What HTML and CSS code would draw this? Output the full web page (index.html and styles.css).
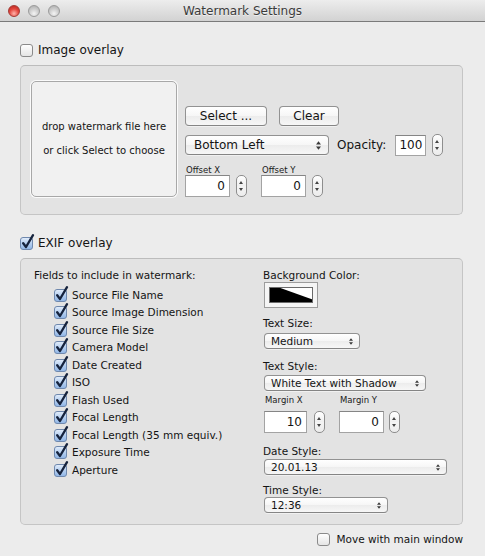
FILE: index.html
```html
<!DOCTYPE html>
<html>
<head>
<meta charset="utf-8">
<title>Watermark Settings</title>
<link rel="stylesheet" href="styles.css">
</head>
<body>
<svg class="defs" width="0" height="0">
  <defs>
    <linearGradient id="cbon" x1="0" y1="0" x2="0" y2="1">
      <stop offset="0" stop-color="#e4eefb"/>
      <stop offset="0.5" stop-color="#b5cff0"/>
      <stop offset="1" stop-color="#8fb5e6"/>
    </linearGradient>
    <linearGradient id="cboff" x1="0" y1="0" x2="0" y2="1">
      <stop offset="0" stop-color="#ffffff"/>
      <stop offset="1" stop-color="#e4e4e4"/>
    </linearGradient>
    <symbol id="chk" viewBox="0 0 15 16">
      <rect x="0.5" y="3.5" width="12" height="12" rx="2.5" fill="url(#cbon)" stroke="#6f88ad"/>
      <path d="M3.2 9.2 L6 13 L13 1.2" fill="none" stroke="#16233d" stroke-width="2.3" stroke-linecap="round" stroke-linejoin="round"/>
    </symbol>
    <symbol id="unchk" viewBox="0 0 15 16">
      <rect x="0.5" y="3.5" width="12" height="12" rx="2.5" fill="url(#cboff)" stroke="#8a8a8a"/>
    </symbol>
  </defs>
</svg>

<div class="titlebar">
  <div class="lights"><span class="light red"></span><span class="light"></span><span class="light"></span></div>
  <div class="title">Watermark Settings</div>
  <div></div>
</div>

<div class="content">
  <div class="heading"><svg class="cb" width="15" height="16"><use href="#unchk"/></svg><span>Image overlay</span></div>

  <div class="group group-image">
    <div class="dropzone"><p>drop watermark file here</p><p>or click Select to choose</p></div>
    <div class="image-controls">
      <div class="row">
        <button class="btn btn-select">Select ...</button>
        <button class="btn btn-clear">Clear</button>
      </div>
      <div class="row row-pos">
        <div class="popup popup-pos"><span>Bottom Left</span><svg class="ud" width="5" height="9" viewBox="0 0 5 9"><path d="M0 3.6L2.5 0.2L5 3.6Z M0 5.4L2.5 8.8L5 5.4Z"/></svg></div>
        <span class="opacity-label">Opacity:</span>
        <div class="field field-opacity">100</div>
        <span class="stepper"></span>
      </div>
      <div class="row row-offsets">
        <div class="num">
          <div class="mini">Offset X</div>
          <div class="num-row"><div class="field field-off">0</div><span class="stepper"></span></div>
        </div>
        <div class="num num-second">
          <div class="mini">Offset Y</div>
          <div class="num-row"><div class="field field-off">0</div><span class="stepper"></span></div>
        </div>
      </div>
    </div>
  </div>

  <div class="heading heading-exif"><svg class="cb" width="15" height="16"><use href="#chk"/></svg><span>EXIF overlay</span></div>

  <div class="group group-exif">
    <div class="fields">
      <div class="fields-title">Fields to include in watermark:</div>
      <div class="items">
        <div class="item"><svg class="cb" width="15" height="16"><use href="#chk"/></svg><span>Source File Name</span></div>
        <div class="item"><svg class="cb" width="15" height="16"><use href="#chk"/></svg><span>Source Image Dimension</span></div>
        <div class="item"><svg class="cb" width="15" height="16"><use href="#chk"/></svg><span>Source File Size</span></div>
        <div class="item"><svg class="cb" width="15" height="16"><use href="#chk"/></svg><span>Camera Model</span></div>
        <div class="item"><svg class="cb" width="15" height="16"><use href="#chk"/></svg><span>Date Created</span></div>
        <div class="item"><svg class="cb" width="15" height="16"><use href="#chk"/></svg><span>ISO</span></div>
        <div class="item"><svg class="cb" width="15" height="16"><use href="#chk"/></svg><span>Flash Used</span></div>
        <div class="item"><svg class="cb" width="15" height="16"><use href="#chk"/></svg><span>Focal Length</span></div>
        <div class="item"><svg class="cb" width="15" height="16"><use href="#chk"/></svg><span>Focal Length (35 mm equiv.)</span></div>
        <div class="item"><svg class="cb" width="15" height="16"><use href="#chk"/></svg><span>Exposure Time</span></div>
        <div class="item"><svg class="cb" width="15" height="16"><use href="#chk"/></svg><span>Aperture</span></div>
      </div>
    </div>

    <div class="style-col">
      <div class="lbl">Background Color:</div>
      <div class="well"><svg width="44" height="16" viewBox="0 0 44 16"><rect x="0" y="0" width="44" height="16" fill="#000"/><path d="M10 0.5 L43.5 0.5 L43.5 12.5 Z" fill="#fff"/><rect x="0.5" y="0.5" width="43" height="15" fill="none" stroke="#6b6b6b"/></svg></div>

      <div class="lbl lbl-size">Text Size:</div>
      <div class="popup sm popup-size"><span>Medium</span><svg class="ud" width="4" height="7" viewBox="0 0 4 7"><path d="M0 2.8L2 0.2L4 2.8Z M0 4.2L2 6.8L4 4.2Z"/></svg></div>

      <div class="lbl lbl-style">Text Style:</div>
      <div class="popup sm popup-style"><span>White Text with Shadow</span><svg class="ud" width="4" height="7" viewBox="0 0 4 7"><path d="M0 2.8L2 0.2L4 2.8Z M0 4.2L2 6.8L4 4.2Z"/></svg></div>

      <div class="row row-margins">
        <div class="num">
          <div class="mini">Margin X</div>
          <div class="num-row num-row-gap"><div class="field field-mx">10</div><span class="stepper stepper-mx"></span></div>
        </div>
        <div class="num num-my">
          <div class="mini">Margin Y</div>
          <div class="num-row num-row-gap"><div class="field field-my">0</div><span class="stepper stepper-my"></span></div>
        </div>
      </div>

      <div class="lbl lbl-date">Date Style:</div>
      <div class="popup sm popup-date"><span>20.01.13</span><svg class="ud" width="4" height="7" viewBox="0 0 4 7"><path d="M0 2.8L2 0.2L4 2.8Z M0 4.2L2 6.8L4 4.2Z"/></svg></div>

      <div class="lbl lbl-time">Time Style:</div>
      <div class="popup sm popup-time"><span>12:36</span><svg class="ud" width="4" height="7" viewBox="0 0 4 7"><path d="M0 2.8L2 0.2L4 2.8Z M0 4.2L2 6.8L4 4.2Z"/></svg></div>
    </div>
  </div>

  <div class="footer"><svg class="cb" width="15" height="16"><use href="#unchk"/></svg><span>Move with main window</span></div>
</div>
</body>
</html>
```

FILE: styles.css
```css
* { box-sizing: border-box; }
html, body { margin: 0; padding: 0; }
body {
  width: 485px;
  height: 556px;
  overflow: hidden;
  background: #ececec;
  font-family: "DejaVu Sans", "Noto Sans", sans-serif;
  color: #141414;
}
.defs { position: absolute; width: 0; height: 0; overflow: hidden; }

/* title bar */
.titlebar {
  display: grid;
  grid-template-columns: 1fr auto 1fr;
  align-items: center;
  height: 22px;
  border-bottom: 1px solid #7a7a7a;
  background: linear-gradient(#ededed, #d2d2d2);
}
.lights { display: flex; gap: 8px; padding-left: 8px; }
.light {
  width: 12px; height: 12px; border-radius: 50%;
  border: 1px solid #9b9b9b;
  background: radial-gradient(circle at 50% 75%, #f4f4f4 0%, #cdcdcd 50%, #a9a9a9 100%);
}
.light.red {
  border-color: #a33a34;
  background: radial-gradient(circle at 50% 75%, #ffb3aa 0%, #e4473e 50%, #b4221b 100%);
}
.title { font-size: 12px; color: #3b3b3b; text-shadow: 0 1px 0 rgba(255,255,255,.6); }

.content { padding: 0 22px 0 20px; }

/* checkbox headings */
.heading {
  display: flex; align-items: center; gap: 3px;
  height: 16px; margin-top: 20px; font-size: 12px;
}
.cb { flex: none; display: block; margin-top: -3px; }

/* groups */
.group {
  margin-top: 7px;
  border: 1px solid #c5c5c5;
  border-top-color: #bcbcbc;
  border-radius: 5px;
  background: #e3e3e3;
}
.group-image { display: flex; align-items: flex-start; padding: 15px 10px 17px; }
.dropzone {
  flex: none;
  width: 146px; height: 116px;
  border: 1px solid #a8a8a8; border-radius: 5px;
  background: #f1f1f1;
  box-shadow: 0 0 0 1px rgba(255,255,255,.85);
  display: flex; flex-direction: column; justify-content: center; align-items: center;
  font-size: 10px; line-height: 24px;
}
.dropzone p { margin: 0; }
.image-controls { margin-left: 8px; margin-top: 25px; display: flex; flex-direction: column; }
.row { display: flex; align-items: center; }

.btn {
  font: inherit; font-size: 12px; color: #141414;
  height: 20px; padding: 0;
  border: 1px solid #929292; border-bottom-color: #858585; border-radius: 4px;
  background: linear-gradient(#ffffff, #f6f6f6 50%, #ececec 51%, #f7f7f7);
  box-shadow: 0 1px 0 rgba(255,255,255,.5);
}
.btn-select { width: 82px; }
.btn-clear { width: 60px; margin-left: 12px; }

.row-pos { margin-top: 8px; }
.popup {
  display: flex; align-items: center; justify-content: space-between;
  height: 20px; padding: 0 7px 0 8px;
  border: 1px solid #929292; border-bottom-color: #858585; border-radius: 4px;
  background: linear-gradient(#ffffff, #f6f6f6 50%, #ececec 51%, #f7f7f7);
  box-shadow: 0 1px 0 rgba(255,255,255,.5);
  font-size: 12px; white-space: nowrap;
}
.popup-pos { width: 144px; }
.ud { display: block; fill: #3a3a3a; flex: none; }
.opacity-label { font-size: 12px; margin-left: 8px; }

.field {
  background: #fff;
  border: 1px solid #a3a3a3; border-top-color: #858585;
  font-size: 12px; text-align: right; padding-right: 4px;
  height: 22px; line-height: 20px;
}
.field-opacity { width: 31px; height: 21px; line-height: 19px; margin-left: 9px; padding-right: 3px; }
.stepper {
  flex: none; position: relative; display: block;
  width: 11px; height: 22px; margin-left: 6px;
  border: 1px solid #8e8e8e; border-radius: 5px;
  background: linear-gradient(#ffffff, #f0f0f0 49%, #d9d9d9 50%, #f4f4f4 51%, #ececec);
}
.stepper::before, .stepper::after {
  content: ""; position: absolute; left: 2px;
  border-left: 2.5px solid transparent; border-right: 2.5px solid transparent;
}
.stepper::before { top: 5px; border-bottom: 3px solid #444; }
.stepper::after { bottom: 5px; border-top: 3px solid #444; }

.row-offsets { margin-top: 9px; align-items: flex-start; }
.num { display: flex; flex-direction: column; }
.mini { font-size: 8.5px; line-height: 10px; padding-left: 1px; color: #1a1a1a; }
.num-row { display: flex; align-items: center; }
.field-off { width: 45px; }
.num-second { margin-left: 14px; }

/* EXIF group */
.heading-exif { margin-top: 20px; }
.group-exif {
  display: grid; grid-template-columns: 229px 1fr;
  padding: 9px 0 11px 13px;
}
.fields-title { font-size: 10.5px; line-height: 14px; }
.items { margin-top: 4px; }
.item {
  display: flex; align-items: center; gap: 3px;
  height: 17.5px; padding-left: 20px;
  font-size: 10.5px;
}
.item .cb { margin-top: -2px; }

.style-col { display: flex; flex-direction: column; align-items: flex-start; }
.lbl { font-size: 10.5px; line-height: 14px; }
.well {
  margin-left: 1px;
  width: 54px; height: 26px; padding: 4px;
  border: 1px solid #9c9c9c;
  background: #f5f5f5;
}
.well svg { display: block; }
.lbl-size { margin-top: 8px; }
.popup.sm {
  height: 16px; font-size: 10.5px; padding: 0 6px 0 6px; margin-left: 1px;
  border-radius: 4px;
}
.popup-size { width: 96px; margin-top: 3px; }
.lbl-style { margin-top: 10px; }
.popup-style { width: 162px; margin-top: 2px; }
.row-margins { margin-top: 4px; margin-left: 1px; align-items: flex-start; }
.num-row-gap { margin-top: 6px; }
.field-mx { width: 43px; }
.stepper-mx { margin-left: 7px; }
.num-my { margin-left: 14px; }
.field-my { width: 45px; }
.stepper-my { margin-left: 5px; }
.lbl-date { margin-top: 11px; }
.popup-date { width: 183px; margin-top: 1px; }
.lbl-time { margin-top: 8px; }
.popup-time { width: 124px; margin-top: 0; }

.footer {
  display: flex; justify-content: flex-end; align-items: center; gap: 4px;
  height: 16px; margin-top: 6px; font-size: 10.5px;
}
```
